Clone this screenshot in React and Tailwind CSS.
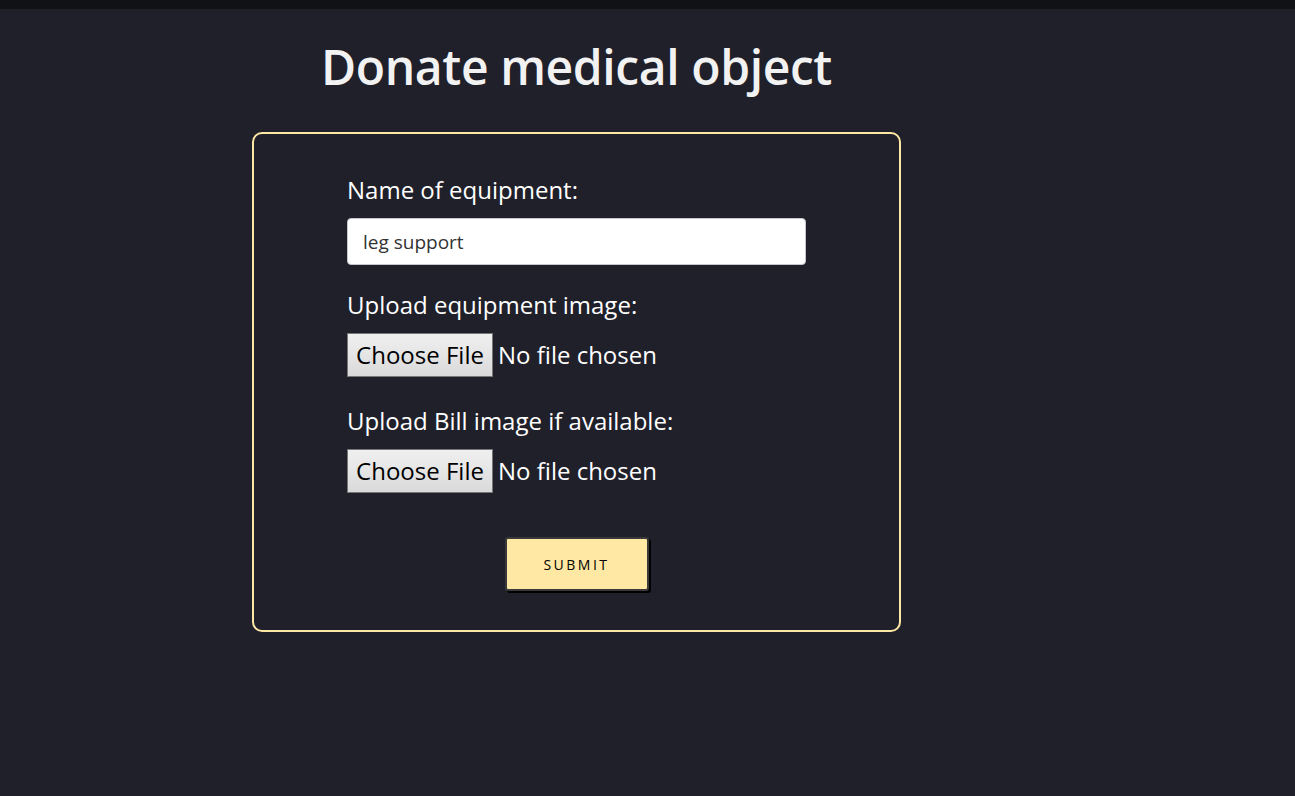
import React from "react";

const FileField = ({ label }) => (
  <div className="flex flex-col">
    <label className="text-[24px] leading-[32px] text-white">{label}</label>
    <div className="mt-[12px] flex items-center">
      <button
        type="button"
        className="h-[44px] w-[146px] border border-[#767676] bg-gradient-to-b from-[#f0f0f0] to-[#dadada] text-[24px] leading-none text-black"
      >
        Choose File
      </button>
      <span className="ml-[5px] text-[24px] leading-none text-white">No file chosen</span>
    </div>
  </div>
);

const App = () => {
  return (
    <div
      className="min-h-[796px] bg-[#20202a]"
      style={{ fontFamily: '"Open Sans", "Noto Sans", sans-serif' }}
    >
      <div className="h-[9px] bg-[#111216]"></div>
      <div className="flex w-[1153px] flex-col items-center">
        <h1 className="mt-[26px] text-[48px] font-semibold leading-[64px] tracking-[-0.4px] text-[#f2f2f2]">
          Donate medical object
        </h1>

        <form className="mt-[33px] flex h-[500px] w-[649px] flex-col items-center rounded-[10px] border-2 border-[#fde7a4] pt-[40px]">
          <div className="flex w-[459px] flex-col">
            <label className="text-[24px] leading-[32px] text-white">Name of equipment:</label>
            <input
              type="text"
              defaultValue="leg support"
              className="mt-[12px] h-[47px] w-[459px] rounded-[4px] border border-[#c4c6cc] bg-white px-[15px] text-[19px] text-[#333] outline-none"
            />

            <div className="mt-[24px]">
              <FileField label="Upload equipment image:" />
            </div>
            <div className="mt-[28px]">
              <FileField label="Upload Bill image if available:" />
            </div>
          </div>

          <button
            type="submit"
            className="mt-[44px] h-[54px] w-[144px] rounded-[3px] border-2 border-[#3a3a3a] bg-[#ffe8a3] text-[14px] font-medium tracking-[2.5px] text-black shadow-[2px_2px_0_#000]"
          >
            SUBMIT
          </button>
        </form>
      </div>
    </div>
  );
};

export default App;
